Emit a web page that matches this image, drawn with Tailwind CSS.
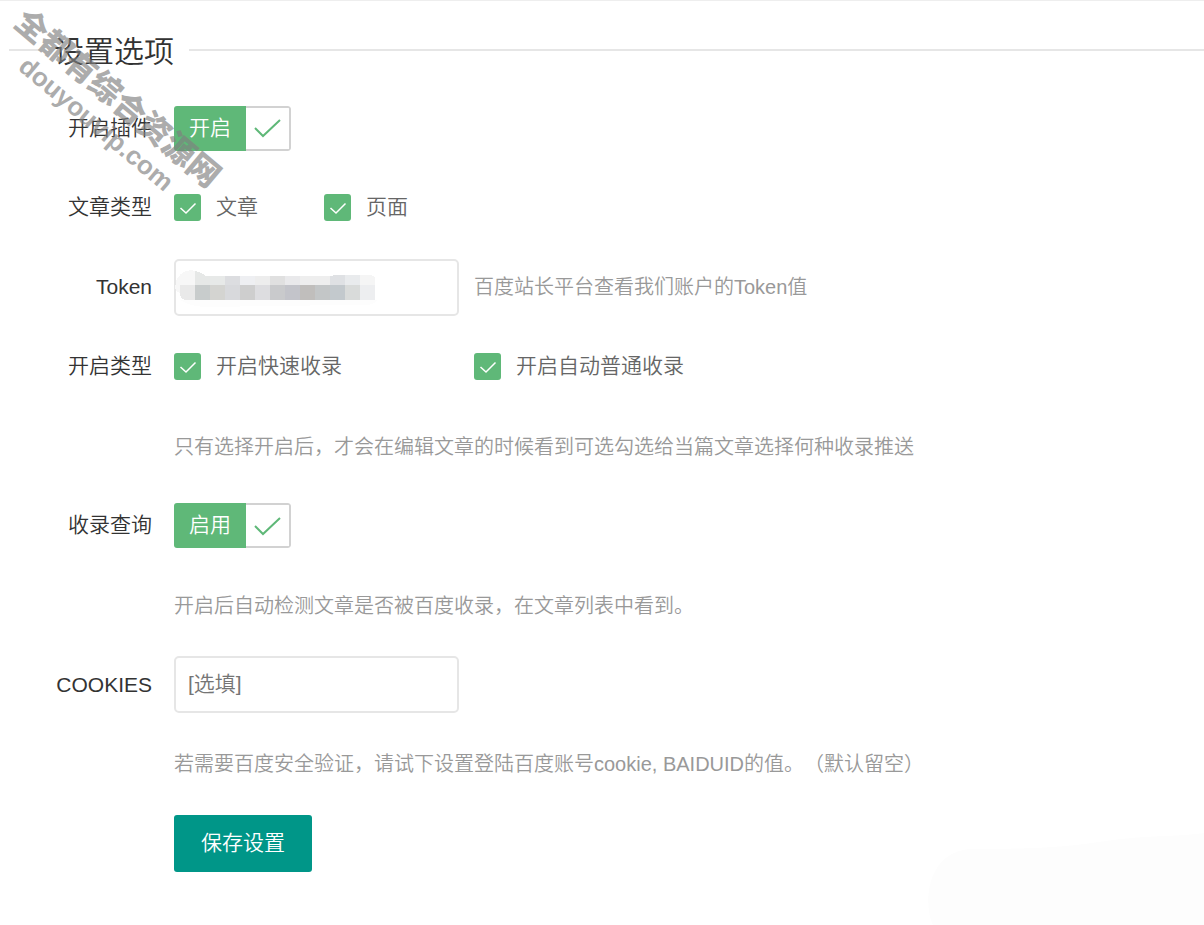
<!DOCTYPE html>
<html lang="zh-CN">
<head>
<meta charset="utf-8">
<meta name="viewport" content="width=device-width, initial-scale=1">
<title>设置选项</title>
<script src="https://cdn.jsdelivr.net/npm/@tailwindcss/browser@4"></script>
</head>
<body class="relative min-h-screen overflow-x-hidden border-t border-[#eeeeee] bg-white font-['Liberation_Sans','Noto_Sans_CJK_SC',sans-serif] text-[21px] leading-[30px] font-[350] text-[#333333] [text-spacing-trim:space-all]">

<svg class="pointer-events-none absolute right-0 bottom-0" width="278" height="92" viewBox="0 0 278 92" aria-hidden="true"><path d="M7 92C-4 68 2 14 50 16C110 16 140 14 180 8C220 2 250 4 278 0V92Z" fill="#fdfdfd"/></svg>

<main class="pl-[9px]">
  <header class="flex items-center pt-[30px]">
    <span class="h-[2px] w-[30px] bg-[#e6e6e6]"></span>
    <h1 class="px-[15px] pt-1 text-[30px] leading-[34px]">设置选项</h1>
    <span class="h-[2px] flex-1 bg-[#e6e6e6]"></span>
  </header>

  <form class="flex flex-col gap-[22px] pt-[31px] pb-8">
    <div class="flex flex-col gap-[22px] pb-px">
      <div class="flex h-[57px] items-center">
        <label for="plugin" class="w-[165px] pr-[22px] pb-[2px] text-right">开启插件</label>
        <label for="plugin" class="flex h-[45px] cursor-pointer overflow-hidden rounded-[3px]">
          <input id="plugin" type="checkbox" checked class="sr-only">
          <span class="flex items-center bg-[#5fb878] px-[15px] pb-[2px] text-white">开启</span>
          <span class="flex w-[45px] items-center justify-center rounded-r-[3px] border-2 border-l-0 border-[#d2d2d2]">
            <svg width="28" height="20" viewBox="0 0 28 20" fill="none" stroke="#5fb878" stroke-width="2" aria-hidden="true"><path d="M1 9L9 17L26 1"/></svg>
          </span>
        </label>
      </div>

      <div class="flex h-[57px] items-center" role="group" aria-labelledby="post-types">
        <span id="post-types" class="w-[165px] pr-[22px] pb-[2px] text-right">文章类型</span>
        <label class="flex w-[150px] cursor-pointer items-center gap-[15px] text-[#666666]">
          <span class="grid size-[27px]">
            <input type="checkbox" checked class="col-start-1 row-start-1 size-[27px] appearance-none rounded-[3px] bg-[#5fb878]">
            <svg class="pointer-events-none col-start-1 row-start-1" width="27" height="27" viewBox="0 0 27 27" fill="none" stroke="#fff" stroke-width="1.500" aria-hidden="true"><path d="M6.500 14L12 19L21.500 9.500"/></svg>
          </span>
          <span class="pb-[2px]">文章</span>
        </label>
        <label class="flex cursor-pointer items-center gap-[15px] text-[#666666]">
          <span class="grid size-[27px]">
            <input type="checkbox" checked class="col-start-1 row-start-1 size-[27px] appearance-none rounded-[3px] bg-[#5fb878]">
            <svg class="pointer-events-none col-start-1 row-start-1" width="27" height="27" viewBox="0 0 27 27" fill="none" stroke="#fff" stroke-width="1.500" aria-hidden="true"><path d="M6.500 14L12 19L21.500 9.500"/></svg>
          </span>
          <span class="pb-[2px]">页面</span>
        </label>
      </div>
    </div>

    <div class="flex h-[57px] items-center">
      <label for="token" class="w-[165px] pr-[22px] pb-[2px] text-right">Token</label>
      <div class="relative w-[285px]">
        <input id="token" type="text" class="block h-[57px] w-full rounded-[5px] border-2 border-[#e6e6e6] bg-white px-3">
        <!-- masked token value -->
        <svg class="pointer-events-none absolute top-[10px] left-px" width="204" height="38" viewBox="0 0 204 38" shape-rendering="crispEdges" aria-hidden="true">
          <path d="M5 31H203Q198 36 190 36H170L30 38Q14 37 5 31Z" fill="#fdfdfd"/>
          <path d="M0 18C0 7 9 1 16 1L20 2V16H5V24Q0 22 0 18Z" fill="#f7f7f7"/>
          <path d="M5 16H20V31H11Q6 30 5 26Z" fill="#e9e9e9"/>
          <path d="M20 2Q26 3 31 7H35V16H20Z" fill="#e6e8e7"/>
          <path d="M35 7H50V16H35Z" fill="#e7e9e8"/>
          <path d="M50 7H65V16H50Z" fill="#dcdde0"/>
          <path d="M65 7H80V16H65Z" fill="#eeeff2"/>
          <path d="M80 7H95V16H80Z" fill="#ededed"/>
          <path d="M95 7H110V16H95Z" fill="#e0e0e0"/>
          <path d="M110 7H125V16H110Z" fill="#e9e9eb"/>
          <path d="M125 7H155V16H125Z" fill="#eeeeee"/>
          <path d="M155 7L160 6H170V16H155Z" fill="#dfe1e4"/>
          <path d="M170 6H185V16H170Z" fill="#e9ebed"/>
          <path d="M185 6H196Q200 7 200 10V16H185Z" fill="#f5f5f5"/>
          <path d="M20 16H35V31H20Z" fill="#c8cccc"/>
          <path d="M35 16H50V31H35Z" fill="#d4d4d1"/>
          <path d="M50 16H65V31H50Z" fill="#d8d9dc"/>
          <path d="M65 16H80V31H65Z" fill="#cecece"/>
          <path d="M80 16H95V31H80Z" fill="#dddde0"/>
          <path d="M95 16H110V31H95Z" fill="#c9cacc"/>
          <path d="M110 16H125V31H110Z" fill="#c3c4ca"/>
          <path d="M125 16H140V31H125Z" fill="#c0bebc"/>
          <path d="M140 16H155V31H140Z" fill="#c3c6c7"/>
          <path d="M155 16H170V31H155Z" fill="#c3c9cd"/>
          <path d="M170 16H185V31H170Z" fill="#d9dbda"/>
          <path d="M185 16H200V31H185Z" fill="#edeef0"/>
        </svg>
      </div>
      <p class="pb-[2px] pl-[15px] text-[20px] text-[#999999]">百度站长平台查看我们账户的Token值</p>
    </div>

    <div class="flex flex-col gap-[23px]">
      <div class="flex h-[57px] items-center" role="group" aria-labelledby="push-types">
        <span id="push-types" class="w-[165px] pr-[22px] pb-[2px] text-right">开启类型</span>
        <label class="flex w-[300px] cursor-pointer items-center gap-[15px] text-[#666666]">
          <span class="grid size-[27px]">
            <input type="checkbox" checked class="col-start-1 row-start-1 size-[27px] appearance-none rounded-[3px] bg-[#5fb878]">
            <svg class="pointer-events-none col-start-1 row-start-1" width="27" height="27" viewBox="0 0 27 27" fill="none" stroke="#fff" stroke-width="1.500" aria-hidden="true"><path d="M6.500 14L12 19L21.500 9.500"/></svg>
          </span>
          <span class="pb-[2px]">开启快速收录</span>
        </label>
        <label class="flex cursor-pointer items-center gap-[15px] text-[#666666]">
          <span class="grid size-[27px]">
            <input type="checkbox" checked class="col-start-1 row-start-1 size-[27px] appearance-none rounded-[3px] bg-[#5fb878]">
            <svg class="pointer-events-none col-start-1 row-start-1" width="27" height="27" viewBox="0 0 27 27" fill="none" stroke="#fff" stroke-width="1.500" aria-hidden="true"><path d="M6.500 14L12 19L21.500 9.500"/></svg>
          </span>
          <span class="pb-[2px]">开启自动普通收录</span>
        </label>
      </div>
      <p class="flex h-[57px] items-center pl-[165px] text-[20px] text-[#999999]">只有选择开启后，才会在编辑文章的时候看到可选勾选给当篇文章选择何种收录推送</p>
    </div>

    <div class="flex flex-col gap-[23px]">
      <div class="flex h-[57px] items-center">
        <label for="query" class="w-[165px] pr-[22px] pb-[2px] text-right">收录查询</label>
        <label for="query" class="flex h-[45px] cursor-pointer overflow-hidden rounded-[3px]">
          <input id="query" type="checkbox" checked class="sr-only">
          <span class="flex items-center bg-[#5fb878] px-[15px] pb-[2px] text-white">启用</span>
          <span class="flex w-[45px] items-center justify-center rounded-r-[3px] border-2 border-l-0 border-[#d2d2d2]">
            <svg width="28" height="20" viewBox="0 0 28 20" fill="none" stroke="#5fb878" stroke-width="2" aria-hidden="true"><path d="M1 10L9 18L26 2"/></svg>
          </span>
        </label>
      </div>
      <p class="flex h-[57px] items-center pl-[165px] text-[20px] text-[#999999]">开启后自动检测文章是否被百度收录，在文章列表中看到。</p>
    </div>

    <div class="flex flex-col gap-[23px]">
      <div class="flex h-[57px] items-center">
        <label for="cookies" class="w-[165px] pr-[22px] text-right">COOKIES</label>
        <input id="cookies" type="text" placeholder="[选填]" class="h-[57px] w-[285px] rounded-[5px] border-2 border-[#e6e6e6] bg-white px-3 pb-[2px] placeholder:text-[#757575]">
      </div>
      <p class="flex h-[57px] items-center pb-[2px] pl-[165px] text-[20px] text-[#999999]">若需要百度安全验证，请试下设置登陆百度账号cookie, BAIDUID的值。（默认留空）</p>
    </div>

    <div class="pl-[165px]">
      <button type="submit" class="h-[57px] cursor-pointer rounded-[3px] bg-[#009688] px-[27px] pb-[2px] text-white">保存设置</button>
    </div>
  </form>
</main>

<!-- site watermark laid over the form -->
<div class="pointer-events-none absolute top-[76px] left-[-20px] w-[256px] rotate-40 text-center font-bold whitespace-nowrap text-[#808080] opacity-65">
  <p class="text-[32px] leading-[36px] font-black">全都有综合资源网</p>
  <p class="text-[26px] leading-[30px]">douyouvip.com</p>
</div>
</body>
</html>
